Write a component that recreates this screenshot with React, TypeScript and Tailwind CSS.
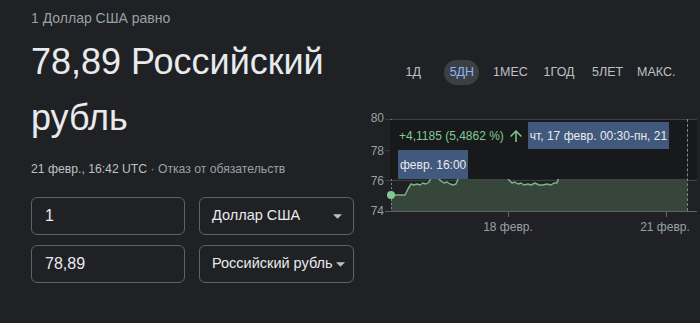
import { useState } from 'react';

const TABS = ['1Д', '5ДН', '1МЕС', '1ГОД', '5ЛЕТ', 'МАКС.'];

// line of the 5-day chart, in page coordinates
const LINE =
  'M391 195 L405 195 L408 189 L411 184 L414 185 L417 184 L420 185 L423 183 L426 184 L429 182 L432 176 L436 170 L438 178 L441 181 L444 183 L447 182 L450 184 L453 185 L456 184 L458 179 L461 172 L470 168 L480 172 L500 170 L506 176 L509 180 L512 183 L515 182 L518 184 L521 183 L524 185 L528 184 L531 185 L535 183 L539 185 L543 185 L547 184 L551 185 L554 183 L557 183 L559 177 L562 170 L600 166 L640 168 L687 165';

const Caret = () => (
  <svg width="9" height="5" viewBox="0 0 10 5" className="shrink-0">
    <polygon points="0,0 10,0 5,5" fill="#bdc1c6" />
  </svg>
);

const Field = ({ value }: { value: string }) => (
  <div className="h-[38px] rounded-[6px] border border-[#5f6368] pl-[13px] flex items-center text-[16px] text-[#e8eaed]">
    {value}
  </div>
);

const CurrencySelect = ({ value }: { value: string }) => (
  <div className="h-[38px] rounded-[6px] border border-[#5f6368] pl-[12px] pr-[11px] flex items-center justify-between gap-[3px] text-[14.5px] text-[#e8eaed]">
    <span className="whitespace-nowrap">{value}</span>
    <Caret />
  </div>
);

const ArrowUp = () => (
  <svg width="18" height="18" viewBox="0 0 24 24" className="shrink-0">
    <path d="M4 12l1.41 1.41L11 7.83V20h2V7.83l5.58 5.59L20 12l-8-8-8 8z" fill="#81c995" />
  </svg>
);

const RateChart = () => (
  <div className="relative w-[335px] h-[125px]">
    <svg width="335" height="125" viewBox="365 110 335 125" className="block">
      <path d={`${LINE} L687 211 L391 211 Z`} fill="#37463b" />
      {[119.5, 150.5, 180.5].map((y) => (
        <line key={y} x1="385" x2="697" y1={y} y2={y} stroke="#3c4043" />
      ))}
      <line x1="385" x2="697" y1="211.5" y2="211.5" stroke="#5f6368" />
      <line x1="391.5" x2="391.5" y1="119" y2="211" stroke="#80868b" strokeDasharray="2 2" />
      <line x1="508.5" x2="508.5" y1="212" y2="217" stroke="#5f6368" />
      <line x1="666.5" x2="666.5" y1="212" y2="217" stroke="#5f6368" />
      <path d={LINE} fill="none" stroke="#76b684" strokeWidth="1.5" strokeLinejoin="round" />
      <circle cx="391" cy="195" r="4" fill="#81c995" />
      <g fill="#9aa0a6" fontSize="12" fontFamily="'Liberation Sans', Arial, sans-serif" textAnchor="end">
        <text x="384" y="122">80</text>
        <text x="384" y="155">78</text>
        <text x="384" y="185">76</text>
        <text x="384" y="215">74</text>
      </g>
      <g fill="#9aa0a6" fontSize="12" fontFamily="'Liberation Sans', Arial, sans-serif" textAnchor="middle">
        <text x="508" y="231">18 февр.</text>
        <text x="665" y="231">21 февр.</text>
      </g>
    </svg>

    {/* hover tooltip over the chart */}
    <div className="absolute left-[25px] top-[10px] w-[307px] h-[59px] bg-[#18191b] flex flex-col text-[12px] leading-none">
      <div className="mt-[2px] h-[27px] flex items-center">
        <span className="ml-[9px] text-[#81c995] whitespace-nowrap">+4,1185 (5,4862 %)</span>
        <span className="ml-[3px]">
          <ArrowUp />
        </span>
        <span className="ml-[3px] h-full px-[2px] flex items-center bg-[#41597c] text-[#e8eaed] whitespace-nowrap">
          чт, 17 февр. 00:30-пн, 21
        </span>
      </div>
      <div className="mt-[1px] ml-[8px] h-[29px] self-start px-[2px] flex items-center bg-[#41597c] text-[#e8eaed] whitespace-nowrap">
        февр. 16:00
      </div>
    </div>
    {/* right dashed edge shows over the tooltip */}
    <div className="absolute left-[322px] top-[9px] h-[92px] border-l border-dashed border-[#80868b]" />
  </div>
);

export default function App() {
  const [active, setActive] = useState('5ДН');

  return (
    <div className="w-[700px] h-[323px] overflow-hidden bg-[#202124] flex font-['Liberation_Sans',Arial,sans-serif]">
      <div className="w-[365px] shrink-0 pl-[31px] flex flex-col">
        <p className="pt-[8px] text-[14px] leading-[20px] text-[#9aa0a6]">1 Доллар США равно</p>
        <div className="mt-[6px] text-[36px] leading-[56px] text-[#e8eaed]">78,89 Российский рубль</div>
        <p className="mt-[15px] text-[12.2px] leading-[16px] whitespace-nowrap">
          <span className="text-[#bdc1c6]">21 февр., 16:42 UTC</span>
          <span className="text-[#9aa0a6]"> · Отказ от обязательств</span>
        </p>
        <div className="mt-[20px] grid grid-cols-[154px_155px] gap-x-[14px] gap-y-[10px]">
          <Field value="1" />
          <CurrencySelect value="Доллар США" />
          <Field value="78,89" />
          <CurrencySelect value="Российский рубль" />
        </div>
      </div>

      <div className="flex-1 flex flex-col">
        <div className="mt-[60px] pl-[24px] flex">
          {TABS.map((tab) => (
            <button
              key={tab}
              onClick={() => setActive(tab)}
              className="w-[48.6px] h-[25px] flex items-center justify-center"
            >
              <span
                className={
                  tab === active
                    ? 'h-[25px] w-[35px] rounded-full bg-[#3c4043] text-[#8ab4f8] text-[12.5px] flex items-center justify-center'
                    : 'text-[12.5px] text-[#bdc1c6]'
                }
              >
                {tab}
              </span>
            </button>
          ))}
        </div>
        <div className="mt-[25px]">
          <RateChart />
        </div>
      </div>
    </div>
  );
}
